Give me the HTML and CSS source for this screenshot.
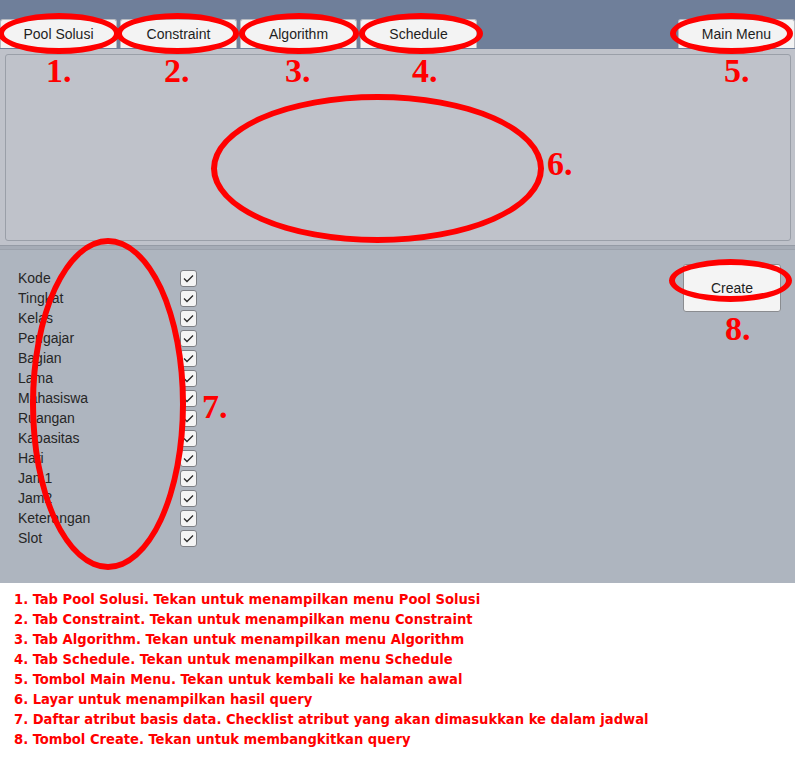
FILE: index.html
```html
<!DOCTYPE html>
<html>
<head>
<meta charset="utf-8">
<link rel="stylesheet" href="styles.css">
</head>
<body>
<div class="page">
  <div class="topbar">
    <div class="tabs">
      <div class="tab">Pool Solusi</div>
      <div class="tab">Constraint</div>
      <div class="tab">Algorithm</div>
      <div class="tab">Schedule</div>
    </div>
    <div class="tab menu">Main Menu</div>
  </div>
  <div class="display-wrap">
    <div class="display"></div>
  </div>
  <div class="separator"></div>
  <div class="main">
    <ul class="attrs">
      <li><span>Kode</span><i class="cb"><svg viewBox="0 0 16 16"><path d="M3.2 8 L6.4 11.2 L12.8 4.8"/></svg></i></li>
      <li><span>Tingkat</span><i class="cb"><svg viewBox="0 0 16 16"><path d="M3.2 8 L6.4 11.2 L12.8 4.8"/></svg></i></li>
      <li><span>Kelas</span><i class="cb"><svg viewBox="0 0 16 16"><path d="M3.2 8 L6.4 11.2 L12.8 4.8"/></svg></i></li>
      <li><span>Pengajar</span><i class="cb"><svg viewBox="0 0 16 16"><path d="M3.2 8 L6.4 11.2 L12.8 4.8"/></svg></i></li>
      <li><span>Bagian</span><i class="cb"><svg viewBox="0 0 16 16"><path d="M3.2 8 L6.4 11.2 L12.8 4.8"/></svg></i></li>
      <li><span>Lama</span><i class="cb"><svg viewBox="0 0 16 16"><path d="M3.2 8 L6.4 11.2 L12.8 4.8"/></svg></i></li>
      <li><span>Mahasiswa</span><i class="cb"><svg viewBox="0 0 16 16"><path d="M3.2 8 L6.4 11.2 L12.8 4.8"/></svg></i></li>
      <li><span>Ruangan</span><i class="cb"><svg viewBox="0 0 16 16"><path d="M3.2 8 L6.4 11.2 L12.8 4.8"/></svg></i></li>
      <li><span>Kapasitas</span><i class="cb"><svg viewBox="0 0 16 16"><path d="M3.2 8 L6.4 11.2 L12.8 4.8"/></svg></i></li>
      <li><span>Hari</span><i class="cb"><svg viewBox="0 0 16 16"><path d="M3.2 8 L6.4 11.2 L12.8 4.8"/></svg></i></li>
      <li><span>Jam1</span><i class="cb"><svg viewBox="0 0 16 16"><path d="M3.2 8 L6.4 11.2 L12.8 4.8"/></svg></i></li>
      <li><span>Jam2</span><i class="cb"><svg viewBox="0 0 16 16"><path d="M3.2 8 L6.4 11.2 L12.8 4.8"/></svg></i></li>
      <li><span>Keterangan</span><i class="cb"><svg viewBox="0 0 16 16"><path d="M3.2 8 L6.4 11.2 L12.8 4.8"/></svg></i></li>
      <li><span>Slot</span><i class="cb"><svg viewBox="0 0 16 16"><path d="M3.2 8 L6.4 11.2 L12.8 4.8"/></svg></i></li>
    </ul>
    <div class="create">Create</div>
  </div>
  <ol class="notes">
    <li>1. Tab Pool Solusi. Tekan untuk menampilkan menu Pool Solusi</li>
    <li>2. Tab Constraint. Tekan untuk menampilkan menu Constraint</li>
    <li>3. Tab Algorithm. Tekan untuk menampilkan menu Algorithm</li>
    <li>4. Tab Schedule. Tekan untuk menampilkan menu Schedule</li>
    <li>5. Tombol Main Menu. Tekan untuk kembali ke halaman awal</li>
    <li>6. Layar untuk menampilkan hasil query</li>
    <li>7. Daftar atribut basis data. Checklist atribut yang akan dimasukkan ke dalam jadwal</li>
    <li>8. Tombol Create. Tekan untuk membangkitkan query</li>
  </ol>

  <div class="ring r1"></div>
  <div class="ring r2"></div>
  <div class="ring r3"></div>
  <div class="ring r4"></div>
  <div class="ring r5"></div>
  <div class="ring r6"></div>
  <div class="ring r7"></div>
  <div class="ring r8"></div>
  <div class="num n1">1.</div>
  <div class="num n2">2.</div>
  <div class="num n3">3.</div>
  <div class="num n4">4.</div>
  <div class="num n5">5.</div>
  <div class="num n6">6.</div>
  <div class="num n7">7.</div>
  <div class="num n8">8.</div>
</div>
</body>
</html>
```
FILE: styles.css
```css
* { box-sizing: border-box; }
html, body { margin: 0; padding: 0; }
body { width: 795px; height: 767px; overflow: hidden; background: #fff; }
.page {
  position: relative;
  width: 795px;
  height: 767px;
  font-family: "Liberation Sans", Arial, sans-serif;
  display: flex;
  flex-direction: column;
}
.topbar {
  height: 49px;
  background: #6f7f9a;
  padding-top: 19px;
  display: flex;
  justify-content: space-between;
  align-items: flex-start;
}
.tabs { display: flex; gap: 3px; }
.tab {
  width: 117px;
  height: 29px;
  background: #f3f3f3;
  border: 1px solid #b9bcc2;
  border-bottom: none;
  border-radius: 3px 3px 0 0;
  color: #1e1e1e;
  font-size: 14px;
  display: flex;
  align-items: center;
  justify-content: center;
}
.tab.menu { width: 117px; }
.display-wrap {
  height: 196px;
  background: #bfc2ca;
  padding: 5px 4px 4px 5px;
}
.display {
  height: 100%;
  border: 1px solid #9a9fa8;
  border-radius: 3px;
  background: #bfc2ca;
}
.separator {
  height: 5px;
  background: #a6acb6;
  border-top: 1px solid #959ba5;
  border-bottom: 1px solid #9ca2ac;
}
.main {
  height: 333px;
  background: #aeb5bf;
  display: flex;
  justify-content: space-between;
  align-items: flex-start;
  padding: 18px 14px 0 18px;
}
.attrs {
  list-style: none;
  margin: 0;
  padding: 0;
  width: 179px;
}
.attrs li {
  height: 20px;
  display: flex;
  align-items: center;
  justify-content: space-between;
  font-size: 14px;
  color: #262626;
}
.cb {
  width: 17px;
  height: 17px;
  background: #f4f4f4;
  border: 1px solid #7d7f84;
  border-radius: 3px;
  display: flex;
}
.cb svg { width: 15px; height: 15px; }
.cb path { fill: none; stroke: #2a2a2a; stroke-width: 1.4; }
.create {
  margin-top: -4px;
  width: 98px;
  height: 48px;
  background: #f4f4f4;
  border: 1px solid #8a8c90;
  border-radius: 3px;
  font-size: 14px;
  color: #1e1e1e;
  display: flex;
  align-items: center;
  justify-content: center;
}
.notes {
  list-style: none;
  margin: 0;
  padding: 6px 0 0 14px;
  flex: 1;
  background: #fff;
  font-family: "DejaVu Sans", sans-serif;
  font-stretch: condensed;
  font-weight: bold;
  font-size: 14.6px;
  line-height: 20px;
  color: #f00;
}
.ring {
  position: absolute;
  border: 6px solid #f00;
  border-radius: 50%;
}
.r1 { left: -2px; top: 13px; width: 122px; height: 41px; }
.r2 { left: 116px; top: 13px; width: 123px; height: 41px; }
.r3 { left: 239px; top: 13px; width: 120px; height: 41px; }
.r4 { left: 359px; top: 13px; width: 124px; height: 41px; }
.r5 { left: 670px; top: 13px; width: 123px; height: 41px; }
.r6 { left: 211px; top: 94px; width: 333px; height: 149px; }
.r7 { left: 30px; top: 238px; width: 156px; height: 332px; }
.r8 { left: 669px; top: 259px; width: 123px; height: 43px; }
.num {
  position: absolute;
  font-family: "Liberation Serif", "Times New Roman", serif;
  font-weight: bold;
  font-size: 34px;
  line-height: 30px;
  color: #f00;
}
.n1 { left: 46px; top: 56px; }
.n2 { left: 164px; top: 56px; }
.n3 { left: 285px; top: 56px; }
.n4 { left: 412px; top: 56px; }
.n5 { left: 724px; top: 56px; }
.n6 { left: 547px; top: 149px; }
.n7 { left: 202px; top: 392px; }
.n8 { left: 725px; top: 314px; }
```
